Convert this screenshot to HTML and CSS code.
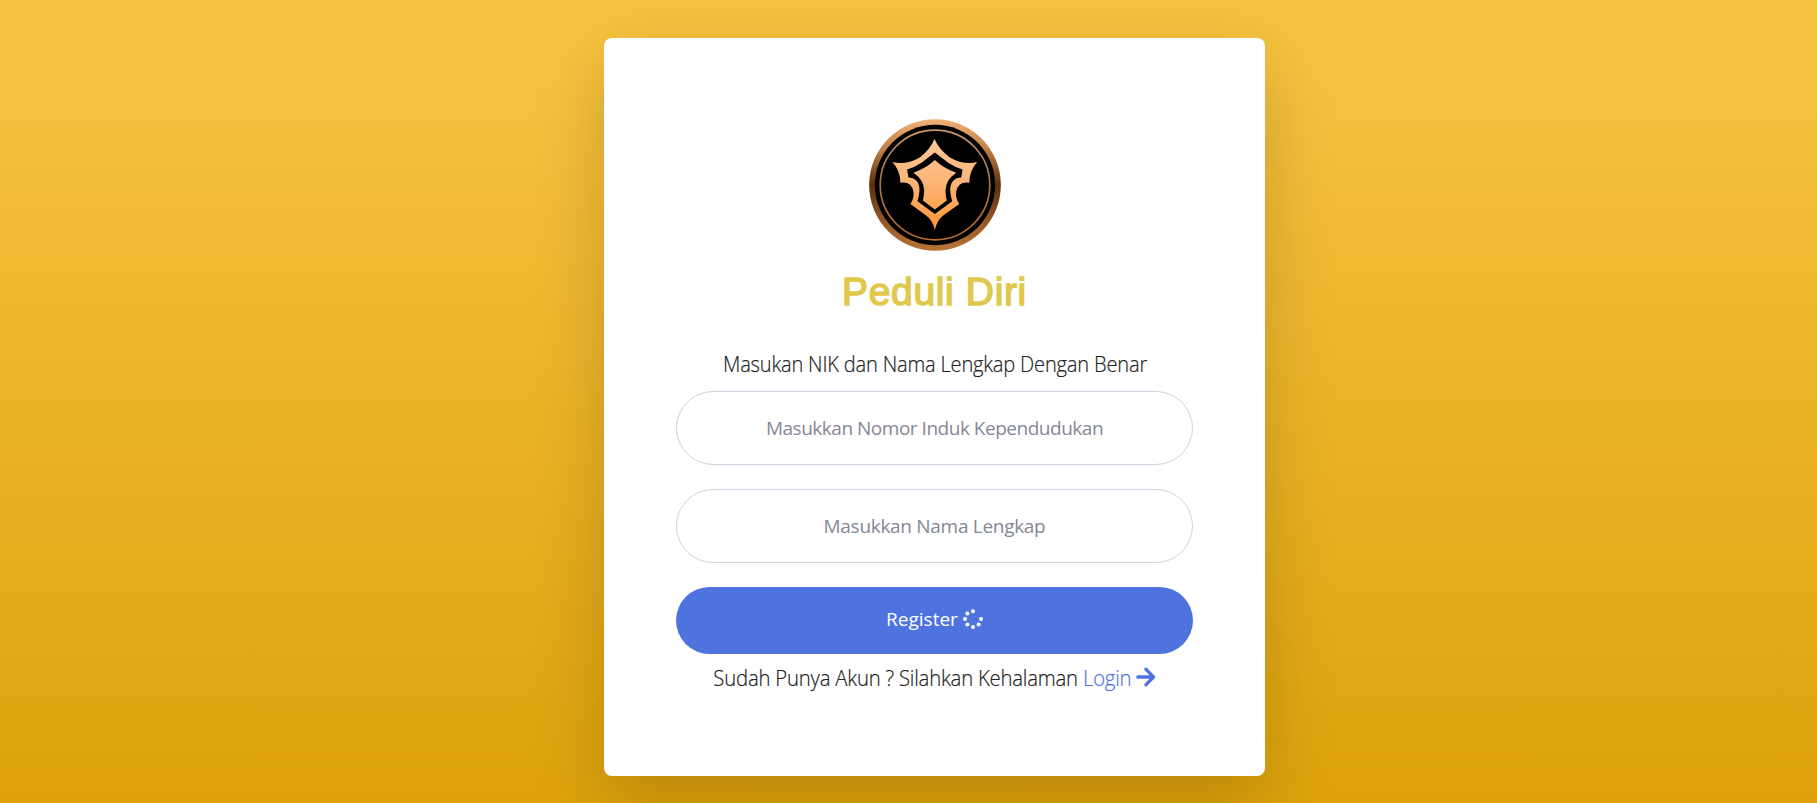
FILE: index.html
```html
<!DOCTYPE html>
<html lang="id">
<head>
<meta charset="utf-8">
<title>Peduli Diri</title>
<link rel="stylesheet" href="styles.css">
</head>
<body>
<main class="card">
  <svg class="logo" viewBox="28 27 395 395" aria-hidden="true">
    <defs>
      <linearGradient id="rim" x1="0" y1="0" x2="0" y2="1">
        <stop offset="0" stop-color="#f0b277"/><stop offset=".25" stop-color="#b97a42"/>
        <stop offset=".5" stop-color="#5c300b"/><stop offset=".75" stop-color="#8e5524"/>
        <stop offset="1" stop-color="#b87436"/>
      </linearGradient>
      <linearGradient id="ring" x1="0" y1="0" x2="0" y2="1">
        <stop offset="0" stop-color="#c9976c"/><stop offset=".5" stop-color="#a87446"/>
        <stop offset="1" stop-color="#b8702c"/>
      </linearGradient>
      <linearGradient id="gold" gradientUnits="userSpaceOnUse" x1="0" y1="88" x2="0" y2="358">
        <stop offset="0" stop-color="#ffc896"/><stop offset=".45" stop-color="#fbb67a"/>
        <stop offset="1" stop-color="#ff9633"/>
      </linearGradient>
    </defs>
    <circle cx="225.500" cy="224.500" r="197" fill="url(#rim)"/>
    <circle cx="225.500" cy="224.500" r="180" fill="#000"/>
    <circle cx="225.500" cy="224.500" r="164" fill="none" stroke="url(#ring)" stroke-width="5"/>
    <path fill="url(#gold)" d="M224 87 Q238 119 270 142 Q310 165 352 156 Q329 180 328 218 Q296 212 289 244 Q286 263 298 281 L252 314 Q231 329 225 359 Q219 329 197 314 L152 281 Q164 263 161 244 Q154 212 122 218 Q121 180 98 156 Q140 165 180 142 Q211 119 224 87Z"/>
    <path fill="#000" d="M225 127 L265 158 Q284 171 308 178 L304 202 Q270 204 271 242 Q272 258 277 273 L225 311 L173 273 Q178 258 179 242 Q180 204 146 202 L142 178 Q166 171 185 158Z"/>
    <path fill="url(#gold)" d="M225 150 Q250 174 289 188 Q257 210 257 241 Q257 258 261 271 L225 298 L189 271 Q193 258 193 241 Q193 210 161 188 Q200 174 225 150Z"/>
  </svg>
  <h1 class="title">Peduli Diri</h1>
  <p class="line lead">Masukan NIK dan Nama Lengkap Dengan Benar</p>
  <form class="form">
    <input class="field nik" type="text" placeholder="Masukkan Nomor Induk Kependudukan">
    <input class="field name" type="text" placeholder="Masukkan Nama Lengkap">
    <button class="submit" type="button"><span>Register</span>
      <svg class="spinner" viewBox="0 0 20 20" fill="#fff" aria-hidden="true">
        <circle cx="10" cy="2.200" r="2"/><circle cx="4.400" cy="4.500" r="2"/>
        <circle cx="2" cy="10" r="2"/><circle cx="4.400" cy="15.600" r="2"/>
        <circle cx="10" cy="18" r="2"/><circle cx="15.600" cy="15.600" r="2"/><circle cx="18" cy="10" r="2"/>
      </svg>
    </button>
  </form>
  <p class="line foot"><span>Sudah Punya Akun ? Silahkan Kehalaman <a class="link" href="#">Login</a></span>
    <svg class="arrow" viewBox="0 0 20 20" preserveAspectRatio="none" fill="none" stroke="#4e73df" stroke-width="3.300" stroke-linecap="round" stroke-linejoin="round" aria-hidden="true"><path d="M2 10H17M10.200 2.200L17.800 10L10.200 17.800"/></svg>
  </p>
</main>
</body>
</html>
```
FILE: styles.css
```css
* { box-sizing: border-box; }
html, body { height: 100%; }
body {
  margin: 0;
  padding: 38px 0 0 52px;
  overflow: hidden;
  background: linear-gradient(180deg, #f6c23e 10%, #dda20a 100%) 0 0 / 100% 814px;
  font-family: "Open Sans", "Noto Sans", sans-serif;
}
.card {
  width: 661px;
  height: 738px;
  margin: 0 auto;
  padding: 81px 72px 0;
  display: flex;
  flex-direction: column;
  align-items: center;
  background: #fff;
  border-radius: 8px;
  box-shadow: 0 24px 72px rgba(0, 0, 0, .175);
}
.logo { width: 132px; height: 132px; flex: none; }
.title {
  margin: 18px 0 0;
  font: 39px/46px "Liberation Sans", sans-serif;
  letter-spacing: .65px;
  color: #e0c84c;
  -webkit-text-stroke: 1.5px #e0c84c;
  white-space: nowrap;
}
.line {
  margin: 0;
  font-weight: 300;
  font-size: 21.500px;
  line-height: 36px;
  color: #222;
  letter-spacing: -.2px;
  -webkit-text-stroke: .2px;
  white-space: nowrap;
}
.lead { margin-top: 31px; transform: scaleX(.934); }
.form { width: 517px; margin-top: 9px; display: flex; flex-direction: column; gap: 24px; }
.field {
  width: 100%;
  height: 74px;
  padding: 0 24px 1px;
  border: 1px solid #d1d0e2;
  border-radius: 37px;
  background: #fff;
  text-align: center;
  font: 19px "Open Sans", sans-serif;
}
.field::placeholder { color: #858796; opacity: 1; }
.nik { letter-spacing: -.48px; }
.name { letter-spacing: -.3px; }
.submit {
  height: 67px;
  padding: 0 0 3px;
  border: 0;
  border-radius: 34px;
  background: #4e73df;
  color: #fff;
  font: 19px "Open Sans", sans-serif;
  display: flex;
  align-items: center;
  justify-content: center;
  gap: 5px;
}
.spinner { width: 20px; height: 20px; }
.foot { margin-top: 6px; display: flex; align-items: center; gap: 5px; transform: scaleX(.943); }
.link { color: #4e73df; text-decoration: none; }
.arrow { width: 21px; height: 20px; margin-top: -2px; }
```
